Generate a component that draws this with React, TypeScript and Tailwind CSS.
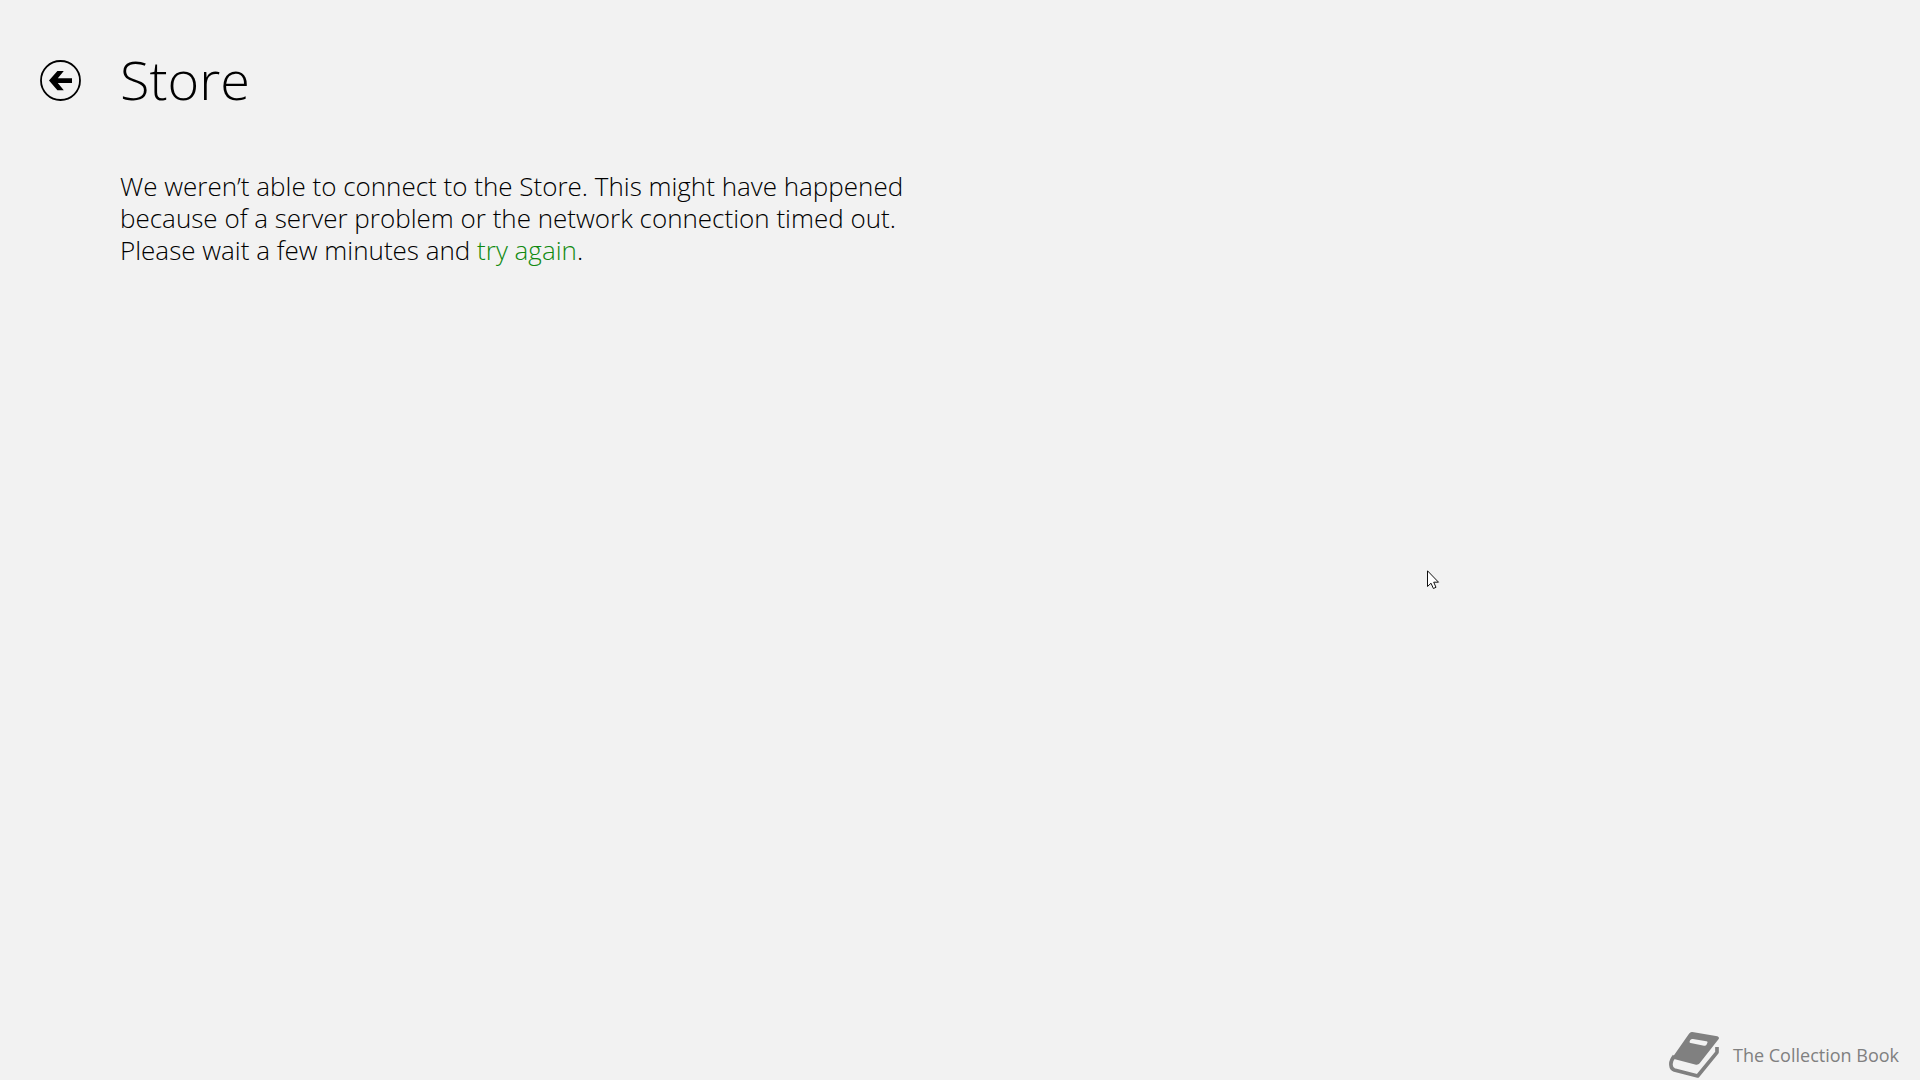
function BackIcon() {
  return (
    <svg viewBox="0 0 42 42" className="size-[42px]" aria-hidden="true">
      <circle
        cx="20.5"
        cy="20.5"
        r="19.5"
        fill="none"
        stroke="#000"
        strokeWidth="1.8"
      />
      <path
        d="M9 20.6 L17.4 11 H23.8 L17.8 18.2 H32 V23 H17.8 L23.8 30.2 H17.4 Z"
        fill="#000"
      />
    </svg>
  );
}

function BookIcon() {
  return (
    <svg viewBox="27 33 150 144" className="h-12 w-[50px]" aria-hidden="true">
      {/* Cover with the label cut out */}
      <path
        fillRule="evenodd"
        fill="#808080"
        d="M97 36 L172 49 Q179 51 176 57 L119 130 Q115 135 108 134 L45 118 Q36 116 41 107 L87 41 Q91 35 97 36 Z M91 60 Q86 68 92 69 L132 77 Q137 78 139 75 L142 69 Q144 65 139 64 L99 57 Q94 56 91 60 Z"
      />
      {/* Spine and page edges */}
      <path
        d="M43 108 Q31 123 33 136 Q34 147 43 150 L113 168 L171 97 V81"
        fill="none"
        stroke="#808080"
        strokeWidth="11"
        strokeLinejoin="round"
      />
    </svg>
  );
}

function Cursor() {
  return (
    <svg
      viewBox="0 0 13 20"
      className="pointer-events-none absolute top-[570px] left-[1427px] h-5 w-[13px]"
      aria-hidden="true"
    >
      <path
        d="M0.5 0.8 V16.5 L4 13.2 L6.4 18.5 L9 17.3 L6.7 12.2 H11.5 Z"
        fill="#fff"
        stroke="#111"
        strokeWidth="1"
      />
    </svg>
  );
}

export default function App() {
  return (
    <div className="relative flex min-h-screen flex-col bg-[#f2f2f2] font-['Open_Sans','Noto_Sans',sans-serif] text-black">
      <header className="flex items-start gap-[38px] px-10 pt-11">
        <button type="button" aria-label="Back" className="mt-4">
          <BackIcon />
        </button>
        <h1 className="text-[54px] leading-[70px] font-light">Store</h1>
      </header>

      <main className="grow px-[120px] pt-14">
        <p className="max-w-[810px] text-[26px] leading-8 font-light">
          We weren’t able to connect to the Store. This might have happened
          because of a server problem or the network connection timed out.
          Please wait a few minutes and{" "}
          <a href="#retry" className="text-[#108a10]">
            try again
          </a>
          .
        </p>
      </main>

      <footer className="flex items-center justify-end gap-[14px] px-[21px] pb-px text-[#808080]">
        <BookIcon />
        <span className="text-[18px] leading-6">The Collection Book</span>
      </footer>

      <Cursor />
    </div>
  );
}
